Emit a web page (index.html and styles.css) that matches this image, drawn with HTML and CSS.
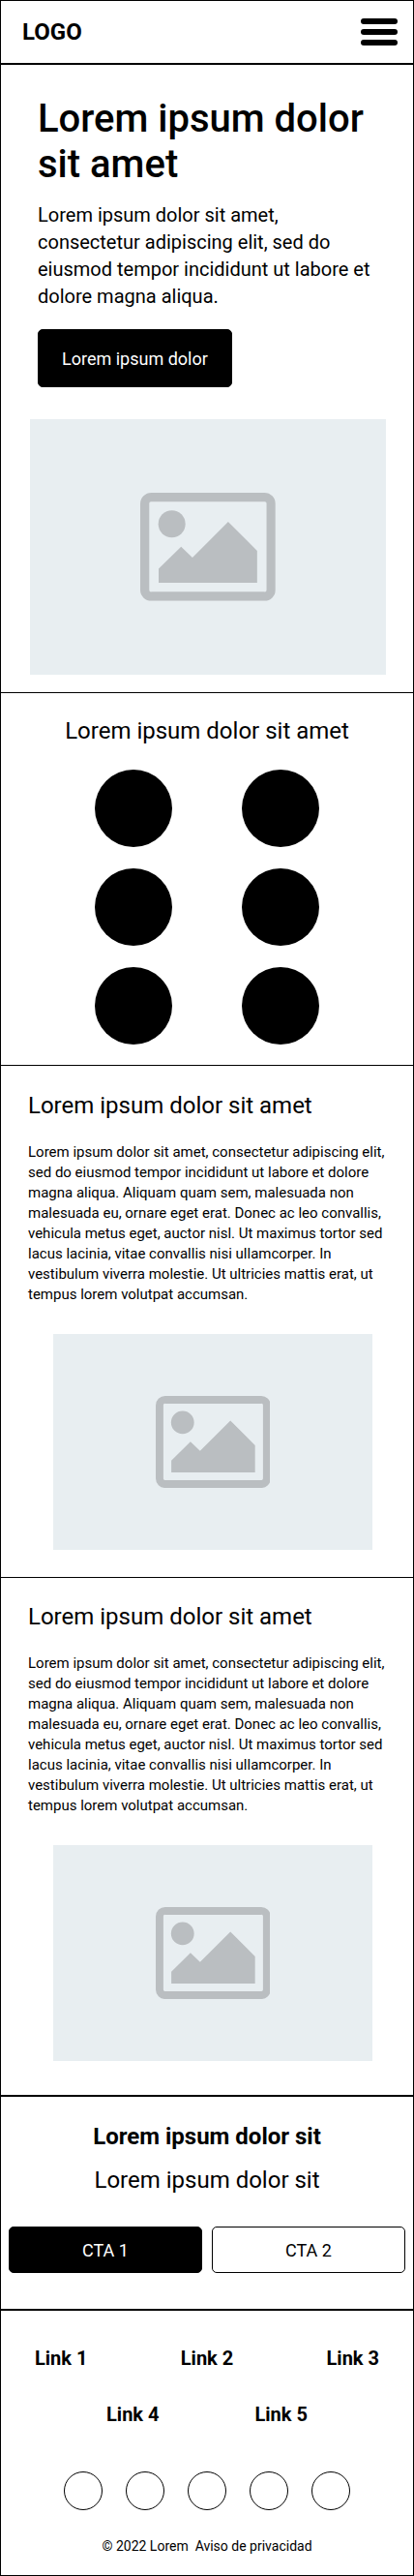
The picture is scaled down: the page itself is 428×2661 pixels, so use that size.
FILE: index.html
```html
<!DOCTYPE html>
<html lang="es">
<head>
<meta charset="utf-8">
<meta name="viewport" content="width=device-width, initial-scale=1">
<title>Lorem ipsum</title>
<link rel="stylesheet" href="styles.css">
</head>
<body>
<svg class="sprite" aria-hidden="true">
  <symbol id="picture" viewBox="0 0 140 112">
    <path fill-rule="evenodd" d="M11.5 0H128.5A11.5 11.5 0 0 1 140 11.5V100.500A11.500 11.500 0 0 1 128.500 112H11.500A11.500 11.500 0 0 1 0 100.500V11.500A11.500 11.500 0 0 1 11.500 0ZM11.500 9.300A2 2 0 0 0 9.300 11.500V100.500A2 2 0 0 0 11.500 102.500H128.500A2 2 0 0 0 130.700 100.500V11.500A2 2 0 0 0 128.500 9.300Z"/>
    <circle cx="32.700" cy="32.300" r="14"/>
    <path d="M19 78.700L42.300 55.700L54 67L91 30L121 60V93H19Z"/>
  </symbol>
</svg>
<div class="page">
  <header class="header">
    <a class="logo" href="#">LOGO</a>
    <button class="menu" type="button" aria-label="Menu">
      <span class="menu-bar"></span>
      <span class="menu-bar"></span>
      <span class="menu-bar"></span>
    </button>
  </header>
  <main>
    <section class="hero">
      <div class="hero-copy">
        <h1 class="hero-title">Lorem ipsum dolor sit amet</h1>
        <p class="hero-text">Lorem ipsum dolor sit amet, consectetur adipiscing elit, sed do eiusmod tempor incididunt ut labore et dolore magna aliqua.</p>
        <button class="button button-hero" type="button">Lorem ipsum dolor</button>
      </div>
      <div class="picture picture-hero"><svg class="picture-icon" viewBox="0 0 140 112" aria-hidden="true"><use href="#picture"/></svg></div>
    </section>
    <section class="features">
      <h2 class="title">Lorem ipsum dolor sit amet</h2>
      <div class="dots">
        <span class="dot"></span><span class="dot"></span>
        <span class="dot"></span><span class="dot"></span>
        <span class="dot"></span><span class="dot"></span>
      </div>
    </section>
    <section class="article">
      <h2 class="title">Lorem ipsum dolor sit amet</h2>
      <p class="article-text">Lorem ipsum dolor sit amet, consectetur adipiscing elit, sed do eiusmod tempor incididunt ut labore et dolore magna aliqua. Aliquam quam sem, malesuada non malesuada eu, ornare eget erat. Donec ac leo convallis, vehicula metus eget, auctor nisl. Ut maximus tortor sed lacus lacinia, vitae convallis nisi ullamcorper. In vestibulum viverra molestie. Ut ultricies mattis erat, ut tempus lorem volutpat accumsan.</p>
      <div class="picture picture-article"><svg class="picture-icon" viewBox="0 0 140 112" aria-hidden="true"><use href="#picture"/></svg></div>
    </section>
    <section class="article article-last">
      <h2 class="title">Lorem ipsum dolor sit amet</h2>
      <p class="article-text">Lorem ipsum dolor sit amet, consectetur adipiscing elit, sed do eiusmod tempor incididunt ut labore et dolore magna aliqua. Aliquam quam sem, malesuada non malesuada eu, ornare eget erat. Donec ac leo convallis, vehicula metus eget, auctor nisl. Ut maximus tortor sed lacus lacinia, vitae convallis nisi ullamcorper. In vestibulum viverra molestie. Ut ultricies mattis erat, ut tempus lorem volutpat accumsan.</p>
      <div class="picture picture-article"><svg class="picture-icon" viewBox="0 0 140 112" aria-hidden="true"><use href="#picture"/></svg></div>
    </section>
    <section class="cta">
      <h2 class="title title-bold">Lorem ipsum dolor sit</h2>
      <p class="title">Lorem ipsum dolor sit</p>
      <div class="cta-actions">
        <button class="button" type="button">CTA 1</button>
        <button class="button button-outline" type="button">CTA 2</button>
      </div>
    </section>
  </main>
  <footer class="footer">
    <nav class="links">
      <div class="links-row">
        <a class="link" href="#">Link 1</a>
        <a class="link" href="#">Link 2</a>
        <a class="link" href="#">Link 3</a>
      </div>
      <div class="links-row links-row-center">
        <a class="link" href="#">Link 4</a>
        <a class="link" href="#">Link 5</a>
      </div>
    </nav>
    <div class="social">
      <a class="social-link" href="#" aria-label="Social 1"></a>
      <a class="social-link" href="#" aria-label="Social 2"></a>
      <a class="social-link" href="#" aria-label="Social 3"></a>
      <a class="social-link" href="#" aria-label="Social 4"></a>
      <a class="social-link" href="#" aria-label="Social 5"></a>
    </div>
    <p class="legal">© 2022 Lorem&nbsp; <a class="legal-link" href="#">Aviso de privacidad</a></p>
  </footer>
</div>
</body>
</html>
```
FILE: styles.css
```css
* {
  box-sizing: border-box;
}

body {
  margin: 0;
  background: #fff;
  color: #000;
  font-family: Roboto, "Liberation Sans", sans-serif;
}

h1, h2, p {
  margin: 0;
}

a {
  color: inherit;
  text-decoration: none;
}

.sprite {
  display: none;
}

.page {
  border: 1px solid #000;
}

.header {
  display: flex;
  align-items: center;
  justify-content: space-between;
  padding: 18px 16px 18px 22px;
  border-bottom: 2px solid #000;
}

.logo {
  font-size: 24px;
  font-weight: 700;
  line-height: 28px;
}

.menu {
  display: flex;
  flex-direction: column;
  justify-content: space-between;
  width: 38px;
  height: 28px;
  padding: 0;
  border: 0;
  background: none;
  cursor: pointer;
}

.menu-bar {
  height: 6px;
  border-radius: 3px;
  background: #000;
}

.hero {
  padding: 32px 28px 18px 30px;
  border-bottom: 1px solid #000;
}

.hero-copy {
  padding: 0 8px;
}

.hero-title {
  margin-bottom: 15px;
  font-size: 40px;
  font-weight: 500;
  line-height: 47px;
}

.hero-text {
  margin-bottom: 20px;
  font-size: 20px;
  line-height: 28px;
}

.button {
  height: 48px;
  padding: 0 24px;
  border: 1px solid #000;
  border-radius: 5px;
  background: #000;
  color: #fff;
  font-family: inherit;
  font-size: 18px;
  cursor: pointer;
}

.button-hero {
  display: block;
  height: 60px;
}

.button-outline {
  background: #fff;
  color: #000;
}

.picture {
  display: grid;
  place-items: center;
  background: #e8eef1;
}

.picture-icon {
  display: block;
  width: 36%;
  fill: #babec1;
}

.picture-hero {
  margin-top: 33px;
  aspect-ratio: 368 / 264;
}

.picture-hero .picture-icon {
  width: 38%;
}

.picture-article {
  margin: 30px 14px 0 26px;
  aspect-ratio: 330 / 223;
}

.title {
  font-size: 24px;
  font-weight: 400;
  line-height: 28px;
}

.title-bold {
  font-weight: 700;
}

.features {
  padding: 25px 20px 21px;
  border-bottom: 1px solid #000;
  text-align: center;
}

.dots {
  display: grid;
  grid-template-columns: 80px 80px;
  justify-content: center;
  gap: 22px 72px;
  margin-top: 26px;
}

.dot {
  height: 80px;
  border-radius: 50%;
  background: #000;
}

.article {
  padding: 27px 28px 28px;
  border-bottom: 1px solid #000;
}

.article-last {
  padding-top: 26px;
  padding-bottom: 35px;
  border-bottom-width: 2px;
}

.article-text {
  margin-top: 24px;
  font-size: 15px;
  line-height: 21px;
}

.cta {
  display: flex;
  flex-direction: column;
  gap: 17px;
  padding: 27px 8px 37px;
  border-bottom: 2px solid #000;
  text-align: center;
}

.cta-actions {
  display: grid;
  grid-template-columns: 1fr 1fr;
  gap: 10px;
  margin-top: 17px;
}

.footer {
  padding: 37px 35px 21px;
}

.links {
  display: grid;
  gap: 34px;
}

.links-row {
  display: flex;
  justify-content: space-between;
}

.links-row-center {
  justify-content: center;
  gap: 99px;
}

.link {
  font-size: 20px;
  font-weight: 700;
  line-height: 24px;
}

.social {
  display: flex;
  justify-content: center;
  gap: 24px;
  margin-top: 47px;
}

.social-link {
  width: 40px;
  height: 40px;
  border: 1px solid #000;
  border-radius: 50%;
}

.legal {
  margin-top: 28px;
  font-size: 14px;
  line-height: 18px;
  text-align: center;
}
```
